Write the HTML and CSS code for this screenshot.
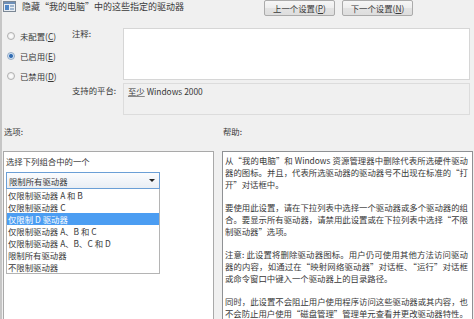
FILE: index.html
```html
<!DOCTYPE html>
<html lang="zh-CN">
<head>
<meta charset="utf-8">
<title>隐藏“我的电脑”中的这些指定的驱动器</title>
<link rel="stylesheet" href="styles.css">
</head>
<body>
<div class="window">
  <div class="header">
    <div class="brand">
      <svg class="icon" width="13" height="11" viewBox="0 0 13 11">
        <rect x="0.5" y="0.5" width="12" height="10" fill="#e9eef4" stroke="#7b8794"/>
        <rect x="1" y="1" width="11" height="2" fill="#6d8fb8"/>
        <rect x="2" y="4" width="4" height="5" fill="#4f86c6"/>
        <rect x="7" y="4" width="4" height="2" fill="#9fb6cf"/>
        <rect x="7" y="7" width="4" height="2" fill="#9fb6cf"/>
      </svg>
      <span class="title">隐藏“我的电脑”中的这些指定的驱动器</span>
    </div>
    <div class="nav">
      <button class="btn">上一个设置(<u>P</u>)</button>
      <button class="btn">下一个设置(<u>N</u>)</button>
    </div>
  </div>

  <div class="settings">
    <div class="states">
      <div class="radio-row"><span class="radio"></span><span>未配置(<u>C</u>)</span></div>
      <div class="radio-row"><span class="radio checked"></span><span>已启用(<u>E</u>)</span></div>
      <div class="radio-row"><span class="radio"></span><span>已禁用(<u>D</u>)</span></div>
    </div>
    <div class="fields">
      <div class="label label-comment">注释:</div>
      <div class="comment"></div>
      <div class="label label-platform">支持的平台:</div>
      <div class="platform"><span class="link">至少</span> Windows 2000</div>
    </div>
  </div>

  <div class="section-labels">
    <div class="section-label">选项:</div>
    <div class="section-label">帮助:</div>
  </div>

  <div class="panels">
    <div class="options">
      <div class="prompt">选择下列组合中的一个</div>
      <div class="combo">
        <span>限制所有驱动器</span>
        <span class="arrow"></span>
      </div>
      <ul class="list">
        <li>仅限制驱动器 A 和 B</li>
        <li>仅限制驱动器 C</li>
        <li class="selected">仅限制 D 驱动器</li>
        <li>仅限制驱动器 A、B 和 C</li>
        <li>仅限制驱动器 A、B、C 和 D</li>
        <li>限制所有驱动器</li>
        <li>不限制驱动器</li>
      </ul>
    </div>
    <div class="help">
      <p>
        <span class="ln">从“我的电脑”和 Windows 资源管理器中删除代表所选硬件驱动</span>
        <span class="ln">器的图标。并且，代表所选驱动器的驱动器号不出现在标准的“打</span>
        <span class="last">开”对话框中。</span>
      </p>
      <p>
        <span class="ln">要使用此设置，请在下拉列表中选择一个驱动器或多个驱动器的组</span>
        <span class="ln">合。要显示所有驱动器，请禁用此设置或在下拉列表中选择“不限</span>
        <span class="last">制驱动器”选项。</span>
      </p>
      <p>
        <span class="ln">注意: 此设置将删除驱动器图标。用户仍可使用其他方法访问驱动</span>
        <span class="ln">器的内容，如通过在“映射网络驱动器”对话框、“运行”对话框</span>
        <span class="last">或命令窗口中键入一个驱动器上的目录路径。</span>
      </p>
      <p>
        <span class="ln">同时，此设置不会阻止用户使用程序访问这些驱动器或其内容，也</span>
        <span class="last">不会防止用户使用“磁盘管理”管理单元查看并更改驱动器特性。</span>
      </p>
    </div>
  </div>
</div>
</body>
</html>
```

FILE: styles.css
```css
html, body {
  margin: 0;
  padding: 0;
}

body {
  width: 474px;
  height: 319px;
  overflow: hidden;
  background: #f0f0f0;
  font-family: "Noto Sans CJK SC", "Noto Sans", sans-serif;
  font-size: 8.4px;
  line-height: 12px;
  color: #383838;
}

.window {
  height: 319px;
  box-sizing: border-box;
  border-left: 2px solid #c6c6c6;
  overflow: hidden;
}

/* header */
.header {
  display: flex;
  align-items: flex-start;
  height: 26px;
}

.brand {
  display: flex;
  align-items: center;
  gap: 6px;
  margin-left: 1px;
  padding-top: 1px;
  height: 11px;
}

.icon {
  display: block;
  flex: none;
}

.title {
  font-size: 9px;
  line-height: 11px;
  color: #3a3a3a;
  white-space: nowrap;
}

.nav {
  display: flex;
  gap: 7px;
  margin-left: auto;
  margin-right: 61px;
}

.btn {
  width: 71px;
  height: 16px;
  box-sizing: border-box;
  padding: 0;
  border: 1px solid #ababab;
  border-radius: 2px;
  background: linear-gradient(#f6f6f6, #eeeeee 50%, #e3e3e3 50%, #dedede);
  font-family: inherit;
  font-size: 8.4px;
  line-height: 12px;
  color: #3a3a3a;
  display: flex;
  align-items: center;
  justify-content: center;
}

/* settings */
.settings {
  display: flex;
}

.states {
  width: 70px;
  box-sizing: border-box;
  padding-left: 5px;
}

.radio-row {
  height: 20px;
  display: flex;
  align-items: center;
  gap: 5px;
  white-space: nowrap;
}

.radio {
  width: 8px;
  height: 8px;
  box-sizing: border-box;
  border-radius: 50%;
  border: 1px solid #b0b0b0;
  background: radial-gradient(circle, #ffffff 0, #e6e6e6 100%);
  flex: none;
}

.radio.checked {
  border-color: #97adc6;
  background: radial-gradient(circle, #2c5f9e 0, #3d78bd 1.6px, #d3e2f3 2.4px);
}

.fields {
  display: grid;
  grid-template-columns: 51px 347px;
  row-gap: 3px;
  padding-top: 2px;
}

.label {
  white-space: nowrap;
}

.label-comment {
  margin-top: -1px;
}

.label-platform {
  padding-top: 1px;
}

.comment {
  height: 52px;
  box-sizing: border-box;
  border: 1px solid #d6d6d6;
  background: #ffffff;
}

.platform {
  height: 32px;
  box-sizing: border-box;
  border: 1px solid #dcdcdc;
  padding: 1px 4px;
  white-space: nowrap;
}

.link {
  text-decoration: underline;
  text-decoration-color: #8a8a8a;
}

/* section labels */
.section-labels {
  display: grid;
  grid-template-columns: 211px 251px;
  column-gap: 8px;
  margin: 10px 0 0 1px;
  height: 12px;
}

.section-label {
  padding-left: 1px;
}

/* panels */
.panels {
  display: grid;
  grid-template-columns: 211px 251px;
  column-gap: 8px;
  margin: 14px 0 0 1px;
  height: 168px;
}

.options {
  box-sizing: border-box;
  border: 1px solid #a9a9a9;
  border-bottom: none;
  background: #ffffff;
  padding: 3px 2px;
  overflow: hidden;
}

.prompt {
  white-space: nowrap;
}

.combo {
  margin-top: 5px;
  width: 154px;
  height: 17px;
  box-sizing: border-box;
  border: 1px solid #6b9fd6;
  background: linear-gradient(#fbfcfe, #e9eef4);
  display: flex;
  align-items: center;
  padding-left: 2px;
}

.arrow {
  margin-left: auto;
  margin-right: 4px;
  width: 0;
  height: 0;
  border-left: 3px solid transparent;
  border-right: 3px solid transparent;
  border-top: 3px solid #222;
}

.list {
  list-style: none;
  margin: 0;
  padding: 0;
  width: 154px;
  box-sizing: border-box;
  border: 1px solid #b4b4b4;
  border-top: none;
  background: #ffffff;
}

.list li {
  height: 12px;
  line-height: 12px;
  padding-left: 1px;
  white-space: nowrap;
}

.list li.selected {
  background: #4b9df2;
  color: #ffffff;
}

.help {
  box-sizing: border-box;
  border: 1px solid #8f9194;
  border-bottom: none;
  background: #ffffff;
  padding: 3px 4px 0 2px;
  line-height: 11.75px;
  overflow: hidden;
}

.help p {
  margin: 0 0 11.75px;
}

.help p:last-child {
  margin-bottom: 0;
}

.ln {
  display: block;
  text-align: justify;
  text-align-last: justify;
  white-space: nowrap;
}

.last {
  display: block;
  white-space: nowrap;
}
```
